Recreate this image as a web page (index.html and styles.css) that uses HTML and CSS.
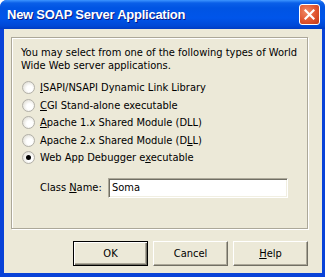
FILE: index.html
```html
<!DOCTYPE html>
<html lang="en">
  <head>
    <meta charset="UTF-8" />
    <title>New SOAP Server Application</title>
    <link rel="stylesheet" href="styles.css">
  </head>
  <body>
    <div class="window">
      <div class="titlebar">
        <span class="title">New SOAP Server Application</span>
        <button class="close" type="button" aria-label="Close">
          <svg width="11" height="11" viewBox="0 0 11 11">
            <path d="M1.5 1.5 L9.5 9.5 M9.5 1.5 L1.5 9.5" stroke="#fff" stroke-width="2.2" stroke-linecap="square" />
          </svg>
        </button>
      </div>
      <div class="frame">
        <div class="group">
          <p class="intro">You may select from one of the following types of World Wide Web server applications.</p>
          <label class="radio-row">
            <span class="radio"></span>
            <span><u>I</u>SAPI/NSAPI Dynamic Link Library</span>
          </label>
          <label class="radio-row">
            <span class="radio"></span>
            <span><u>C</u>GI Stand-alone executable</span>
          </label>
          <label class="radio-row">
            <span class="radio"></span>
            <span><u>A</u>pache 1.x Shared Module (DLL)</span>
          </label>
          <label class="radio-row">
            <span class="radio"></span>
            <span>Apache 2.x Shared Module (D<u>L</u>L)</span>
          </label>
          <label class="radio-row">
            <span class="radio checked"></span>
            <span>Web App Debugger e<u>x</u>ecutable</span>
          </label>
          <div class="field">
            <label for="class_name">Class <u>N</u>ame:</label>
            <input type="text" id="class_name" value="Soma" />
          </div>
        </div>
        <div class="buttons">
          <button type="button" class="btn default">OK</button>
          <button type="button" class="btn">Cancel</button>
          <button type="button" class="btn"><u>H</u>elp</button>
        </div>
      </div>
    </div>
  </body>
</html>
```

FILE: styles.css
```css
body {
  margin: 0;
  font-family: "DejaVu Sans Condensed", "DejaVu Sans", sans-serif;
  font-size: 11px;
  color: #000;
}
.window {
  width: 325px;
  height: 277px;
  display: flex;
  flex-direction: column;
  background-color: #0842d8;
  border-radius: 7px 7px 0 0;
  overflow: hidden;
}
.titlebar {
  height: 29px;
  flex-shrink: 0;
  display: flex;
  align-items: center;
  justify-content: space-between;
  padding: 0 5px 0 7px;
  box-sizing: border-box;
  background: linear-gradient(to bottom, #3d95ff 0px, #0a5fe8 3px, #0054e3 8px, #0055ea 18px, #0048d6 26px, #003bc2 29px);
}
.title {
  color: #fff;
  font-family: "Liberation Sans", Arial, sans-serif;
  font-weight: bold;
  font-size: 13px;
  letter-spacing: -0.25px;
  text-shadow: 1px 1px 0 #0a1883;
}
.close {
  width: 21px;
  height: 21px;
  padding: 0;
  border: 1px solid #fff;
  border-radius: 3px;
  background: radial-gradient(circle at 35% 35%, #f08a66, #e0542f 55%, #c23a17);
  display: flex;
  align-items: center;
  justify-content: center;
}
.frame {
  flex: 1;
  display: flex;
  flex-direction: column;
  background-color: #ece9d8;
  margin: 0 3px 4px 4px;
  padding: 8px 0 0 7px;
}
.group {
  width: 297px;
  height: 192px;
  box-sizing: border-box;
  border: 1px solid #aca899;
  box-shadow: 1px 1px 0 #fff, inset 1px 1px 0 #fff;
  padding: 8px 8px 0 9px;
}
.intro {
  margin: 0 0 7px 0;
  line-height: 13px;
}
.radio-row {
  display: flex;
  align-items: center;
  height: 17.5px;
  gap: 5px;
  padding-left: 1px;
}
.radio {
  width: 13px;
  height: 13px;
  box-sizing: border-box;
  border-radius: 50%;
  border: 1px solid #b2b0a8;
  background: radial-gradient(circle at 60% 60%, #ffffff 30%, #e4e2da 75%, #cfccc2);
  display: flex;
  align-items: center;
  justify-content: center;
}
.radio.checked::after {
  content: "";
  width: 5px;
  height: 5px;
  border-radius: 50%;
  background-color: #000;
}
.field {
  display: flex;
  align-items: center;
  margin-top: 11px;
  padding-left: 19px;
}
.field label {
  width: 68px;
}
.field input {
  width: 180px;
  height: 20px;
  box-sizing: border-box;
  font-family: "DejaVu Sans Condensed", "DejaVu Sans", sans-serif;
  font-size: 11px;
  padding: 0 3px;
  background-color: #fff;
  border: 1px solid;
  border-color: #aca899 #fff #fff #aca899;
  box-shadow: inset 1px 1px 0 #716f64, inset -1px -1px 0 #f1efe2;
  outline: none;
}
.buttons {
  display: flex;
  gap: 5px;
  margin-top: 12px;
  padding-left: 62px;
}
.btn {
  width: 75px;
  height: 25px;
  padding: 0;
  font-family: "DejaVu Sans Condensed", "DejaVu Sans", sans-serif;
  font-size: 11px;
  color: #000;
  background-color: #ece9d8;
  border: 1px solid;
  border-color: #fff #716f64 #716f64 #fff;
  box-shadow: inset -1px -1px 0 #aca899;
}
.btn.default {
  border-color: #000;
  box-shadow: inset 1px 1px 0 #fff, inset -1px -1px 0 #716f64, inset -2px -2px 0 #aca899;
}
```
